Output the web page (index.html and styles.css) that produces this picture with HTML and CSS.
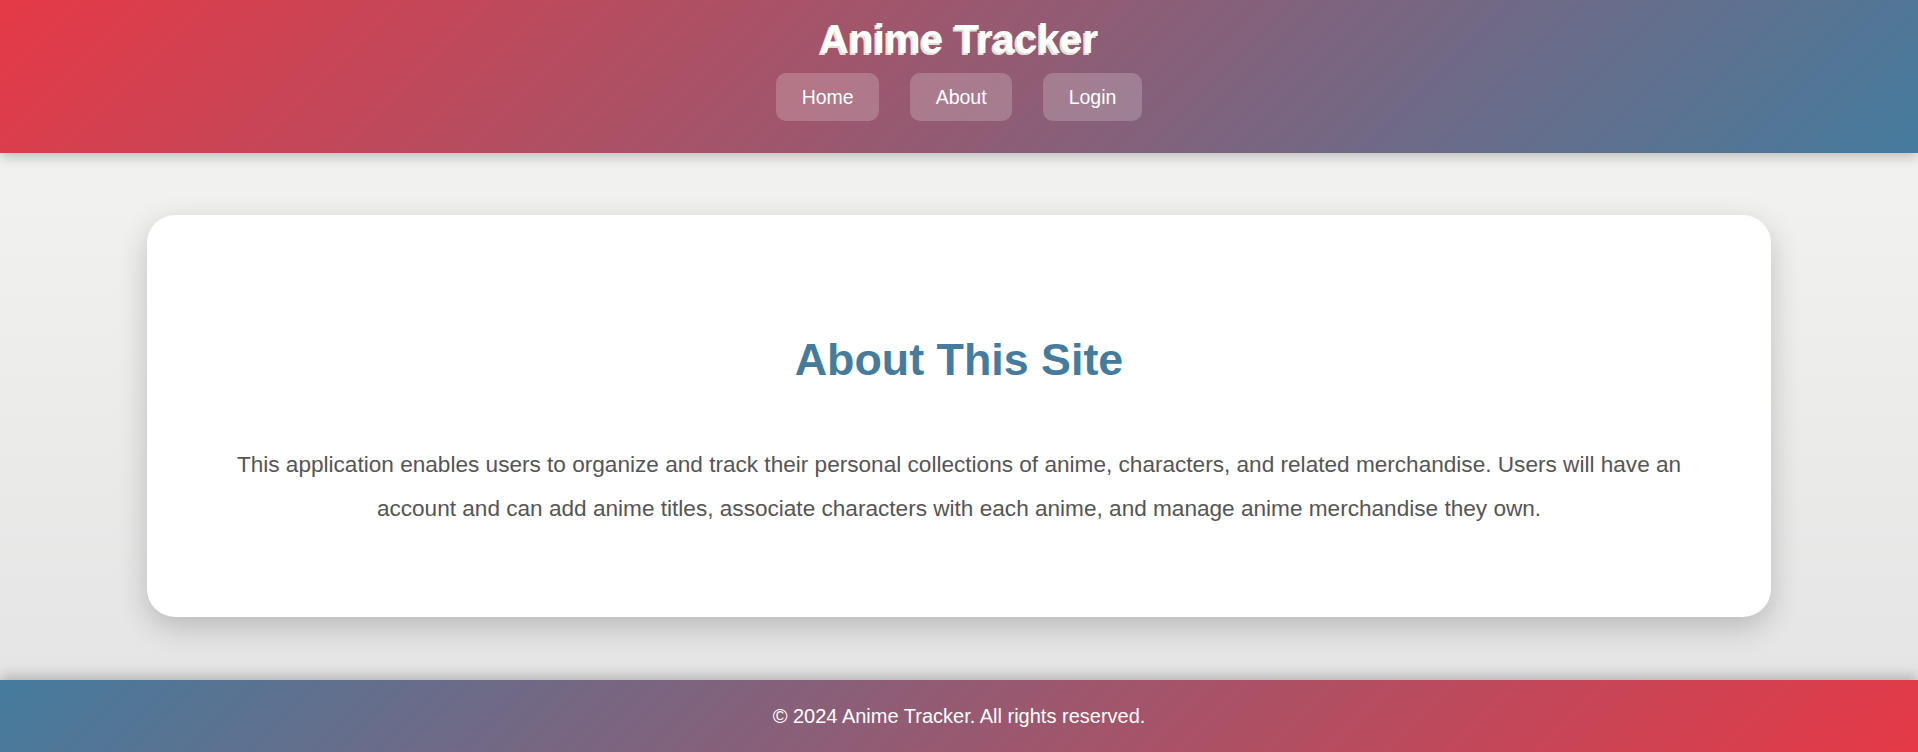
FILE: index.html
```html
<!DOCTYPE html>
<html lang="en">
<head>
<meta charset="utf-8">
<title>Anime Tracker - About</title>
<link rel="stylesheet" href="styles.css">
</head>
<body>
<header class="site-header">
  <h1 class="site-title">Anime Tracker</h1>
  <nav class="site-nav">
    <a class="nav-link" href="#">Home</a>
    <a class="nav-link" href="#">About</a>
    <a class="nav-link" href="#">Login</a>
  </nav>
</header>
<main class="site-main">
  <section class="about-card">
    <h2 class="about-title">About This Site</h2>
    <p class="about-text">This application enables users to organize and track their personal collections of anime, characters, and related merchandise. Users will have an account and can add anime titles, associate characters with each anime, and manage anime merchandise they own.</p>
  </section>
</main>
<footer class="site-footer">
  <p class="footer-text">&copy; 2024 Anime Tracker. All rights reserved.</p>
</footer>
</body>
</html>
```

FILE: styles.css
```css
* {
  box-sizing: border-box;
}

html, body {
  margin: 0;
  padding: 0;
}

body {
  font-family: "Liberation Sans", Arial, sans-serif;
  min-height: 100vh;
  display: flex;
  flex-direction: column;
  background: linear-gradient(to bottom, #f6f6f4, #e3e3e3);
}

.site-header {
  position: relative;
  z-index: 2;
  height: 153px;
  padding: 16px 0 0;
  text-align: center;
  background: linear-gradient(135deg, #e63946, #457b9d);
  box-shadow: 0 4px 12px rgba(0, 0, 0, 0.22);
}

.site-title {
  margin: 0 0 11px;
  font-size: 40.4px;
  line-height: 46px;
  font-weight: bold;
  color: #ffffff;
  text-shadow: -2px 2px 0 rgba(236, 246, 226, 0.9);
}

.site-nav {
  display: flex;
  justify-content: center;
  gap: 31px;
}

.nav-link {
  display: block;
  padding: 13px 25.5px;
  font-size: 19.5px;
  line-height: 22px;
  color: #ffffff;
  text-decoration: none;
  border-radius: 10px;
  background: rgba(255, 255, 255, 0.2);
}

.site-main {
  flex: 1;
  padding: 62px 147px 63px;
}

.about-card {
  height: 402px;
  padding: 119px 64px 0;
  background: #ffffff;
  border-radius: 28px;
  box-shadow: 0 10px 30px rgba(0, 0, 0, 0.2);
  text-align: center;
}

.about-title {
  margin: 0 0 57.5px;
  font-size: 44.8px;
  line-height: 51.5px;
  font-weight: bold;
  color: #457b9d;
}

.about-text {
  margin: 0;
  font-size: 22.6px;
  line-height: 44px;
  color: #555555;
}

.site-footer {
  position: relative;
  z-index: 2;
  height: 72px;
  display: flex;
  align-items: center;
  justify-content: center;
  background: linear-gradient(135deg, #457b9d, #e63946);
  box-shadow: 0 -4px 12px rgba(0, 0, 0, 0.22);
}

.footer-text {
  margin: 0;
  font-size: 20px;
  color: #ffffff;
}
```
